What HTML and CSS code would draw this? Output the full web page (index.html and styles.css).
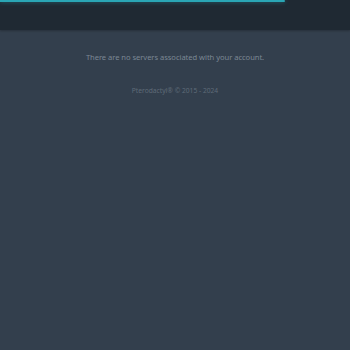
FILE: index.html
```html
<!DOCTYPE html>
<html lang="en">
<head>
    <meta charset="UTF-8">
    <meta name="viewport" content="width=device-width, initial-scale=1.0">
    <title>Pterodactyl</title>
    <link rel="stylesheet" href="styles.css">
</head>
<body>
    <div class="progress-bar" style="width: 285px;"></div>
    <div class="navbar"></div>

    <div class="content">
        <p class="empty">There are no servers associated with your account.</p>
        <p class="footer">Pterodactyl&reg; &copy; 2015 - 2024</p>
    </div>
</body>
</html>
```

FILE: styles.css
```css
body {
    font-family: 'Noto Sans', 'Open Sans', sans-serif;
    background-color: #333f4d;
    margin: 0;
    padding: 0;
    min-height: 350px;
}

.progress-bar {
    position: absolute;
    top: 0;
    left: 0;
    height: 2px;
    background-color: #2aa6b5;
    box-shadow: 0 0 4px rgba(42, 166, 181, 0.6);
    border-radius: 0 2px 2px 0;
}

.navbar {
    height: 30px;
    background-color: #1f2933;
    box-shadow: 0 1px 2px rgba(0, 0, 0, 0.25);
}

.content {
    text-align: center;
    padding-top: 21px;
}

.empty {
    color: #7b8794;
    font-size: 7.6px;
    letter-spacing: -0.05px;
    margin: 0;
    line-height: 13px;
}

.footer {
    color: #5f6b78;
    font-size: 6.7px;
    margin: 22px 0 0;
    line-height: 10px;
}
```
